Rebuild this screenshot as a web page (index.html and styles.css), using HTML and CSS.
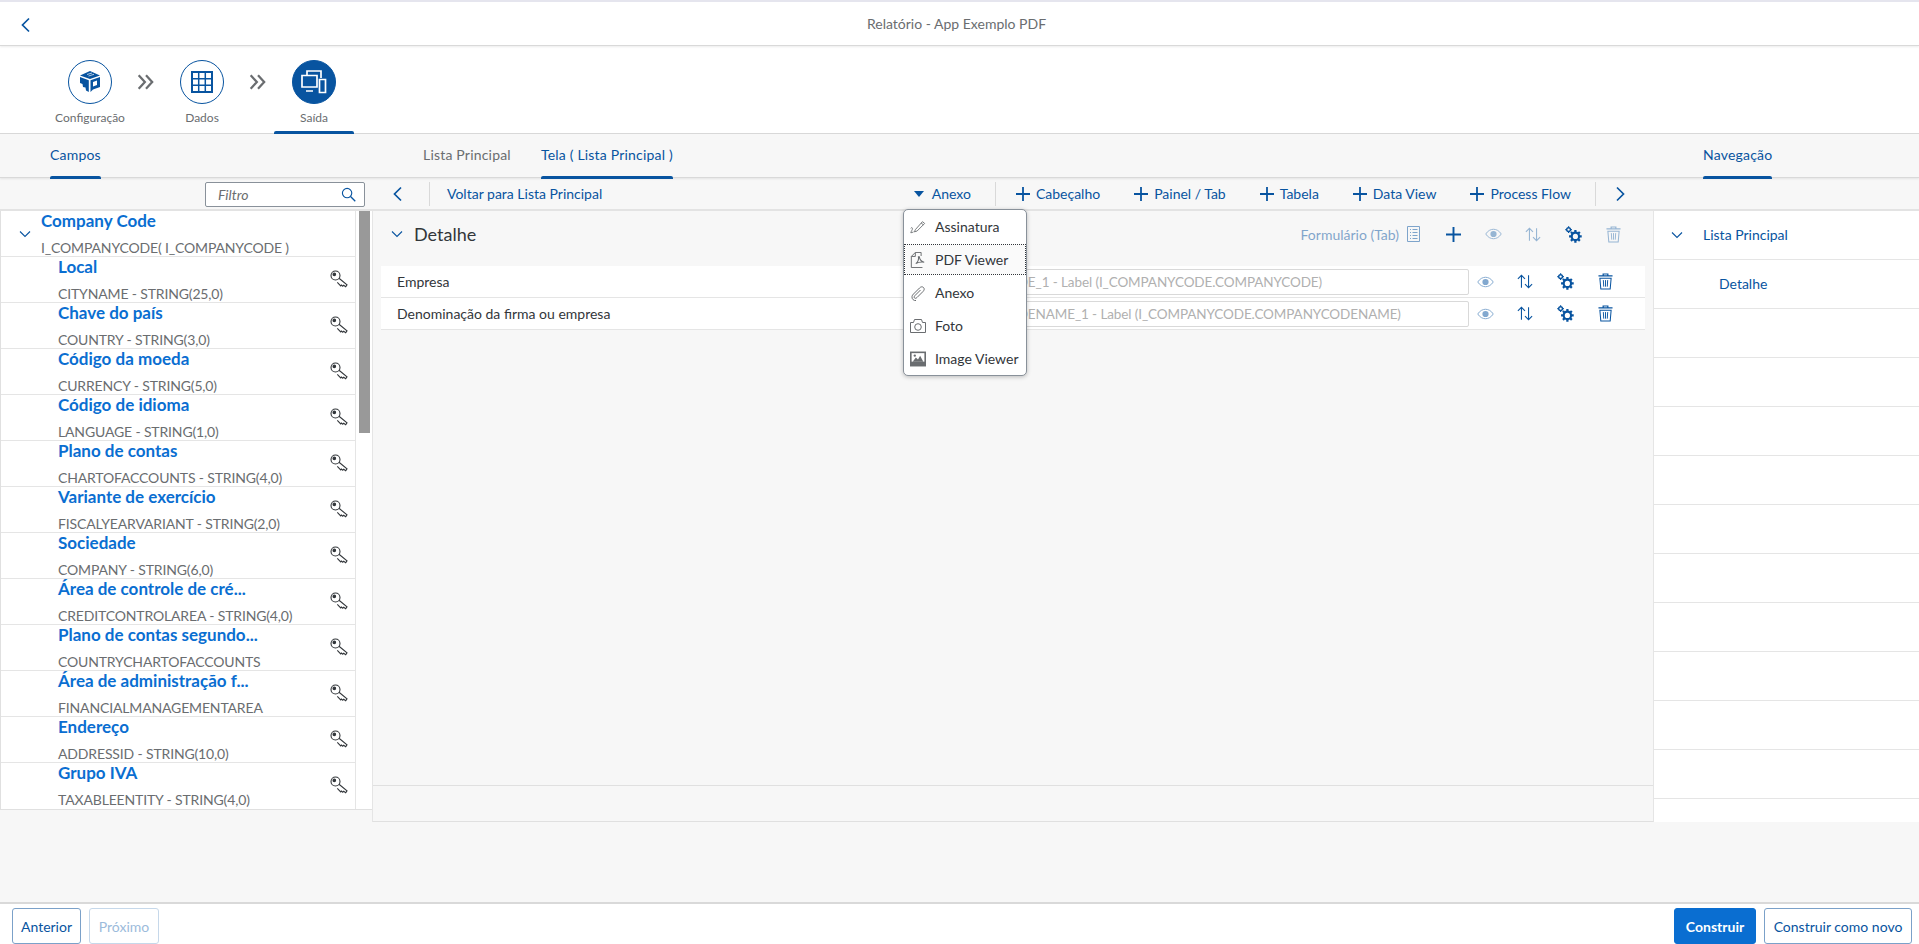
FILE: index.html
```html
<!DOCTYPE html>
<html lang="pt">
  <head>
    <meta charset="UTF-8" />
    <meta name="viewport" content="width=device-width, initial-scale=1.0" />
    <title>Relatório - App Exemplo PDF</title>
    <link rel="stylesheet" href="styles.css">
  </head>
  <body>
    <svg class="sprite" xmlns="http://www.w3.org/2000/svg">
      <symbol id="i-left" viewBox="0 0 16 16"><path d="M11 1.500 4.500 8l6.500 6.500" fill="none" stroke="currentColor" stroke-width="1.700"/></symbol>
      <symbol id="i-right" viewBox="0 0 16 16"><path d="M5 1.500 11.500 8 5 14.500" fill="none" stroke="currentColor" stroke-width="1.700"/></symbol>
      <symbol id="i-down" viewBox="0 0 12 12"><path d="M1 3.500 6 8.500l5-5" fill="none" stroke="currentColor" stroke-width="1.100"/></symbol>
      <symbol id="i-plus" viewBox="0 0 14 14"><path d="M7 0v14M0 7h14" fill="none" stroke="currentColor" stroke-width="1.800"/></symbol>
      <symbol id="i-double" viewBox="0 0 16 14"><path d="M1.500 1 7 7l-5.500 6M8 1l5.500 6L8 13" fill="none" stroke="currentColor" stroke-width="2"/></symbol>
      <symbol id="i-search" viewBox="0 0 16 16"><circle cx="6.500" cy="6.500" r="5" fill="none" stroke="currentColor" stroke-width="1.200"/><path d="m10.200 10.200 5 5" fill="none" stroke="currentColor" stroke-width="1.400"/></symbol>
      <symbol id="i-key" viewBox="0 0 18 18"><g fill="none" stroke="currentColor" stroke-width="1.100"><circle cx="5.500" cy="5.500" r="4.500"/><circle cx="4.300" cy="4.300" r="1.300" fill="currentColor"/><path d="m9 8.300 8 6.500-1.300 1.900-2-1.500-.9 1-1.400-1.100-.7.800-3.400-3.500"/></g></symbol>
      <symbol id="i-box" viewBox="0 0 22 22"><path d="M11 0 21 4.500 11 8 1 4.500zM1 6l8.800 3.200V21L7 19.500l-.5-3-2.500-.5L3.500 13 1 12zM21 6v10l-7 2.500-2.500 2.500V9.200zm-3 3.500-4 1.500v4.500l4-1.500z" fill="currentColor"/><path d="M8 3.500 13 2M9.500 5 15 3.300" stroke="#fff" stroke-width=".7"/></symbol>
      <symbol id="i-table" viewBox="0 0 22 22"><path fill="none" stroke="currentColor" stroke-width="2" d="M1 1h20v20H1z"/><path fill="none" stroke="currentColor" stroke-width="1.500" d="M7.700 1v20M14.300 1v20M1 7.700h20M1 14.300h20"/></symbol>
      <symbol id="i-devices" viewBox="0 0 26 24"><g fill="none" stroke="currentColor" stroke-width="1.700"><path d="M6 5V1h14v7"/><path d="M1 5.500h15V17H1zM5 21h7"/><path d="M18.500 9.500h6v13h-6z"/></g></symbol>
      <symbol id="i-eye" viewBox="0 0 18 12"><path d="M.8 6C3 2.500 6 1 9 1s6 1.500 8.200 5C15 9.500 12 11 9 11S3 9.500.8 6z" fill="none" stroke="currentColor" stroke-width="1"/><circle cx="9" cy="6" r="3.300" fill="currentColor"/></symbol>
      <symbol id="i-sort" viewBox="0 0 18 16"><path d="M5 15V1M1 5l4-4 4 4M13 1v14M9 11l4 4 4-4" fill="none" stroke="currentColor" stroke-width="1.200"/></symbol>
      <symbol id="i-gears" viewBox="0 0 18 18"><g fill="none" stroke="currentColor"><circle cx="3.800" cy="3.800" r="2" stroke-width="1.500"/><path d="M3.800.3v1.200M3.800 6.100v1.200M.3 3.800h1.200M6.100 3.800h1.200" stroke-width="1.300"/><circle cx="11" cy="11" r="3.900" stroke-width="2.300"/><path d="M11 4.300v2.500M11 15.200v2.500M4.300 11h2.500M15.200 11h2.500M6.300 6.300 8 8M14 14l1.700 1.700M6.300 15.700 8 14M14 8l1.700-1.700" stroke-width="2.400"/></g></symbol>
      <symbol id="i-trash" viewBox="0 0 16 18"><g fill="none" stroke="currentColor"><path d="M.5 3h15M5.500 3V1h5v2" stroke-width="1.300"/><path d="M2 5.500 3 17h10l1-11.500z" stroke-width="1.100"/><path d="M5.700 7.500l.4 7M8 7.500v7M10.300 7.500l-.4 7" stroke-width="1"/></g></symbol>
      <symbol id="i-form" viewBox="0 0 13 16"><path d="M.5.500h12v15H.5zM3 3.500h1M5.500 3.500h5M3 6.500h1M5.500 6.500h5M3 9.500h1M5.500 9.500h5M3 12.500h1M5.500 12.500h5" fill="none" stroke="currentColor"/></symbol>
      <symbol id="i-sign" viewBox="0 0 18 16"><g fill="none" stroke="currentColor" stroke-width="1"><path d="m6 11 8-9 2.500 2L8 12.500l-3 1zM12.500 3.500l2.500 2"/><path d="M.8 9.500C2 8 3.500 9 2.500 11S.5 14.500 1 14.500s2-.5 3-1"/></g></symbol>
      <symbol id="i-pdf" viewBox="0 0 16 18"><g fill="none" stroke="currentColor" stroke-width="1.100"><path d="M5 .5h6.500v4M5 .5.500 5v12.500H13"/><path d="M5 .5V5H.5"/><path d="M8.500 5.500c.5 3-1 6-3 7.500 3-1.500 6-2 9.500-1.500-3-.5-5-3-5.500-6z" stroke-width="1.200"/></g></symbol>
      <symbol id="i-clip" viewBox="0 0 16 16"><path d="M6 15.500c-2 .5-4.500-1.500-4-4 .2-1 .6-1.600 1.500-2.500l6-6c1.500-1.500 3-1.500 4-.5s1 2.500-.5 4L7 12.500c-1 1-2 1-2.500.5s-.5-1.500.5-2.500l5.500-5.500" fill="none" stroke="currentColor"/></symbol>
      <symbol id="i-camera" viewBox="0 0 16 14"><path d="M.5 3.500h3l1-3h7l1 3h3v10H.5z" fill="none" stroke="currentColor"/><circle cx="8" cy="8" r="3.300" fill="none" stroke="currentColor"/></symbol>
      <symbol id="i-image" viewBox="0 0 15 14"><path d="M0 0h15v14H0z" fill="currentColor"/><path d="M1.500 1.500h12v8h-12z" fill="#fff"/><path d="m2.500 9.500 3-4 2 2 2-3.500 3 5.500z" fill="currentColor"/><circle cx="4.500" cy="3.800" r="1.100" fill="currentColor"/></symbol>
    </svg>

    <header class="topbar">
      <svg class="icon back"><use href="#i-left"/></svg>
      <span class="topbar-title">Relatório - App Exemplo PDF</span>
    </header>

    <nav class="wizard">
      <div class="step">
        <span class="step-circle"><svg class="step-icon"><use href="#i-box"/></svg></span>
        <span class="step-label">Configuração</span>
      </div>
      <svg class="step-arrow"><use href="#i-double"/></svg>
      <div class="step">
        <span class="step-circle"><svg class="step-icon"><use href="#i-table"/></svg></span>
        <span class="step-label">Dados</span>
      </div>
      <svg class="step-arrow"><use href="#i-double"/></svg>
      <div class="step step-active">
        <span class="step-circle"><svg class="step-icon step-icon-wide"><use href="#i-devices"/></svg></span>
        <span class="step-label">Saída</span>
      </div>
    </nav>

    <div class="tabs">
      <div class="tabs-left"><a class="tab tab-active">Campos</a></div>
      <div class="tabs-mid">
        <a class="tab">Lista Principal</a>
        <a class="tab tab-active">Tela ( Lista Principal )</a>
      </div>
      <div class="tabs-right"><a class="tab tab-active">Navegação</a></div>
    </div>

    <div class="toolbars">
      <div class="filter-bar">
        <div class="filter">
          <span>Filtro</span>
          <svg class="icon-search"><use href="#i-search"/></svg>
        </div>
      </div>
      <div class="toolbar">
        <svg class="icon chevron"><use href="#i-left"/></svg>
        <span class="tool-sep"></span>
        <span class="tool-link">Voltar para Lista Principal</span>
        <div class="tool-group">
          <span class="tool-btn"><span class="caret"></span>Anexo</span>
          <span class="tool-sep"></span>
          <span class="tool-btn"><svg class="plus"><use href="#i-plus"/></svg>Cabeçalho</span>
          <span class="tool-btn"><svg class="plus"><use href="#i-plus"/></svg>Painel / Tab</span>
          <span class="tool-btn"><svg class="plus"><use href="#i-plus"/></svg>Tabela</span>
          <span class="tool-btn"><svg class="plus"><use href="#i-plus"/></svg>Data View</span>
          <span class="tool-btn"><svg class="plus"><use href="#i-plus"/></svg>Process Flow</span>
          <span class="tool-sep"></span>
          <svg class="icon chevron"><use href="#i-right"/></svg>
        </div>
      </div>
      <div class="toolbar-end"></div>
    </div>

    <main class="workspace">
      <aside class="fields">
        <div class="field-list">
          <div class="field-row field-root">
            <svg class="root-chevron"><use href="#i-down"/></svg>
            <div class="field-name">Company Code</div>
            <div class="field-type">I_COMPANYCODE( I_COMPANYCODE )</div>
          </div>
          <div class="field-row">
            <div class="field-name">Local</div>
            <div class="field-type">CITYNAME - STRING(25,0)</div>
            <svg class="key"><use href="#i-key"/></svg>
          </div>
          <div class="field-row">
            <div class="field-name">Chave do país</div>
            <div class="field-type">COUNTRY - STRING(3,0)</div>
            <svg class="key"><use href="#i-key"/></svg>
          </div>
          <div class="field-row">
            <div class="field-name">Código da moeda</div>
            <div class="field-type">CURRENCY - STRING(5,0)</div>
            <svg class="key"><use href="#i-key"/></svg>
          </div>
          <div class="field-row">
            <div class="field-name">Código de idioma</div>
            <div class="field-type">LANGUAGE - STRING(1,0)</div>
            <svg class="key"><use href="#i-key"/></svg>
          </div>
          <div class="field-row">
            <div class="field-name">Plano de contas</div>
            <div class="field-type">CHARTOFACCOUNTS - STRING(4,0)</div>
            <svg class="key"><use href="#i-key"/></svg>
          </div>
          <div class="field-row">
            <div class="field-name">Variante de exercício</div>
            <div class="field-type">FISCALYEARVARIANT - STRING(2,0)</div>
            <svg class="key"><use href="#i-key"/></svg>
          </div>
          <div class="field-row">
            <div class="field-name">Sociedade</div>
            <div class="field-type">COMPANY - STRING(6,0)</div>
            <svg class="key"><use href="#i-key"/></svg>
          </div>
          <div class="field-row">
            <div class="field-name">Área de controle de cré...</div>
            <div class="field-type">CREDITCONTROLAREA - STRING(4,0)</div>
            <svg class="key"><use href="#i-key"/></svg>
          </div>
          <div class="field-row">
            <div class="field-name">Plano de contas segundo...</div>
            <div class="field-type">COUNTRYCHARTOFACCOUNTS</div>
            <svg class="key"><use href="#i-key"/></svg>
          </div>
          <div class="field-row">
            <div class="field-name">Área de administração f...</div>
            <div class="field-type">FINANCIALMANAGEMENTAREA</div>
            <svg class="key"><use href="#i-key"/></svg>
          </div>
          <div class="field-row">
            <div class="field-name">Endereço</div>
            <div class="field-type">ADDRESSID - STRING(10,0)</div>
            <svg class="key"><use href="#i-key"/></svg>
          </div>
          <div class="field-row">
            <div class="field-name">Grupo IVA</div>
            <div class="field-type">TAXABLEENTITY - STRING(4,0)</div>
            <svg class="key"><use href="#i-key"/></svg>
          </div>
        </div>
        <div class="scroll-track"><div class="scroll-thumb"></div></div>
      </aside>

      <section class="canvas">
        <div class="canvas-body">
          <div class="section-head">
            <svg class="section-chevron"><use href="#i-down"/></svg>
            <span class="section-title">Detalhe</span>
            <div class="section-actions">
              <span class="form-tag">Formulário (Tab)<svg class="form-icon"><use href="#i-form"/></svg></span>
              <span class="act"><svg class="plus-big"><use href="#i-plus"/></svg></span>
              <span class="act faded"><svg class="eye"><use href="#i-eye"/></svg></span>
              <span class="act faded"><svg class="sort"><use href="#i-sort"/></svg></span>
              <span class="act"><svg class="gears"><use href="#i-gears"/></svg></span>
              <span class="act faded"><svg class="trash"><use href="#i-trash"/></svg></span>
            </div>
          </div>
          <div class="form-row">
            <span class="form-label">Empresa</span>
            <div class="form-input">COMPANYCODE_1 - Label (I_COMPANYCODE.COMPANYCODE)</div>
            <div class="row-actions">
              <span class="act faded-eye"><svg class="eye"><use href="#i-eye"/></svg></span>
              <span class="act"><svg class="sort"><use href="#i-sort"/></svg></span>
              <span class="act"><svg class="gears"><use href="#i-gears"/></svg></span>
              <span class="act"><svg class="trash"><use href="#i-trash"/></svg></span>
            </div>
          </div>
          <div class="form-row">
            <span class="form-label">Denominação da firma ou empresa</span>
            <div class="form-input">COMPANYCODENAME_1 - Label (I_COMPANYCODE.COMPANYCODENAME)</div>
            <div class="row-actions">
              <span class="act faded-eye"><svg class="eye"><use href="#i-eye"/></svg></span>
              <span class="act"><svg class="sort"><use href="#i-sort"/></svg></span>
              <span class="act"><svg class="gears"><use href="#i-gears"/></svg></span>
              <span class="act"><svg class="trash"><use href="#i-trash"/></svg></span>
            </div>
          </div>
        </div>
        <div class="canvas-foot"></div>

        <ul class="menu">
          <li><svg class="menu-icon"><use href="#i-sign"/></svg>Assinatura</li>
          <li class="menu-focus"><svg class="menu-icon"><use href="#i-pdf"/></svg>PDF Viewer</li>
          <li><svg class="menu-icon"><use href="#i-clip"/></svg>Anexo</li>
          <li><svg class="menu-icon"><use href="#i-camera"/></svg>Foto</li>
          <li><svg class="menu-icon"><use href="#i-image"/></svg>Image Viewer</li>
        </ul>
      </section>

      <aside class="tree">
        <div class="tree-row"><svg class="tree-chevron"><use href="#i-down"/></svg>Lista Principal</div>
        <div class="tree-row tree-child">Detalhe</div>
        <div class="tree-row"></div>
        <div class="tree-row"></div>
        <div class="tree-row"></div>
        <div class="tree-row"></div>
        <div class="tree-row"></div>
        <div class="tree-row"></div>
        <div class="tree-row"></div>
        <div class="tree-row"></div>
        <div class="tree-row"></div>
        <div class="tree-row"></div>
      </aside>
    </main>

    <div class="spacer"></div>

    <footer class="footer">
      <button class="btn btn-prev">Anterior</button>
      <button class="btn btn-next">Próximo</button>
      <button class="btn btn-primary">Construir</button>
      <button class="btn btn-copy">Construir como novo</button>
    </footer>
  </body>
</html>
```

FILE: styles.css
```css
* {
  margin: 0;
  padding: 0;
  box-sizing: border-box;
}

body {
  font-family: Lato, "Liberation Sans", sans-serif;
  font-size: 14px;
  color: #32363a;
  background: #f7f7f7;
  height: 100vh;
  overflow: hidden;
  display: flex;
  flex-direction: column;
}

.sprite {
  display: none;
}

/* top bar */
.topbar {
  height: 46px;
  flex: none;
  background: white;
  border-top: 2px solid #e5e5ee;
  border-bottom: 1px solid #d9d9d9;
  box-shadow: 0 1px 2px rgba(0, 0, 0, 0.08);
  padding-right: 6px;
  display: flex;
  align-items: center;
  justify-content: center;
  position: relative;
}

.topbar-title {
  color: #6a6d70;
}

.back {
  position: absolute;
  left: 18px;
  top: 15px;
  width: 16px;
  height: 16px;
  color: #0854a0;
}

/* wizard */
.wizard {
  height: 88px;
  flex: none;
  background: white;
  padding-left: 50px;
  display: flex;
  border-bottom: 1px solid #d9d9d9;
}

.step {
  width: 80px;
  display: flex;
  flex-direction: column;
  align-items: center;
  padding-top: 14px;
  position: relative;
}

.step-circle {
  width: 44px;
  height: 44px;
  border-radius: 50%;
  border: 1px solid #0854a0;
  color: #0854a0;
  display: flex;
  align-items: center;
  justify-content: center;
}

.step-icon {
  width: 22px;
  height: 22px;
}

.step-icon-wide {
  width: 26px;
  height: 24px;
}

.step-label {
  font-size: 12px;
  color: #6a6d70;
  margin-top: 6px;
  white-space: nowrap;
}

.step-active .step-circle {
  background: #0854a0;
  color: white;
}

.step-active::after {
  content: "";
  position: absolute;
  left: 0;
  right: 0;
  bottom: -1px;
  height: 3px;
  background: #0854a0;
  border-radius: 2px 2px 0 0;
}

.step-arrow {
  width: 18px;
  height: 16px;
  margin: 28px 7px 0;
  color: #6a6d70;
}

/* tabs */
.tabs {
  height: 44px;
  flex: none;
  display: grid;
  grid-template-columns: 372px 1282px 265px;
  border-bottom: 1px solid #d9d9d9;
  box-shadow: 0 1px 2px rgba(0, 0, 0, 0.08);
  position: relative;
  letter-spacing: 0.2px;
}

.tabs-left {
  padding-left: 50px;
  display: flex;
}

.tabs-mid {
  padding-left: 51px;
  display: flex;
  gap: 30px;
}

.tabs-right {
  padding-left: 49px;
  display: flex;
}

.tab {
  color: #6a6d70;
  height: 44px;
  line-height: 42px;
  position: relative;
}

.tab-active {
  color: #0854a0;
}

.tab-active::after {
  content: "";
  position: absolute;
  left: 0;
  right: 0;
  bottom: -1px;
  height: 3px;
  background: #0854a0;
  border-radius: 2px 2px 0 0;
}

/* toolbars */
.toolbars {
  height: 33px;
  flex: none;
  display: grid;
  grid-template-columns: 372px 1282px 265px;
  border-bottom: 2px solid #e3e3e3;
}

.filter-bar {
  padding: 4px 0 0 205px;
}

.filter {
  width: 160px;
  height: 25px;
  border: 1px solid #89919a;
  border-radius: 2px;
  background: white;
  padding: 0 8px 0 12px;
  display: flex;
  align-items: center;
  justify-content: space-between;
  font-style: italic;
  color: #6a6d70;
}

.icon-search {
  width: 15px;
  height: 15px;
  color: #0854a0;
}

.toolbar {
  display: flex;
  align-items: center;
  padding-left: 18px;
  color: #0854a0;
}

.toolbar .chevron {
  width: 16px;
  height: 16px;
}

.tool-sep {
  width: 1px;
  height: 24px;
  background: #d9d9d9;
}

.toolbar > .tool-sep {
  margin-left: 23px;
}

.tool-link {
  margin-left: 17px;
}

.tool-group {
  margin-left: auto;
  padding-right: 26px;
  display: flex;
  align-items: center;
}

.tool-btn {
  display: flex;
  align-items: center;
  gap: 6px;
  margin-left: 34px;
  white-space: nowrap;
}

.tool-btn:first-child {
  margin-left: 0;
}

.tool-sep + .tool-btn {
  margin-left: 20px;
}

.tool-group > .tool-sep {
  margin-left: 24px;
}

.tool-group > .chevron {
  margin-left: 16px;
}

.caret {
  width: 0;
  height: 0;
  margin-right: 2px;
  border-left: 5px solid transparent;
  border-right: 5px solid transparent;
  border-top: 6px solid #0854a0;
}

.plus {
  width: 14px;
  height: 14px;
}

/* main area */
.workspace {
  height: 611px;
  flex: none;
  display: grid;
  grid-template-columns: 372px 1282px 265px;
}

.fields {
  height: 599px;
  background: white;
  border-left: 1px solid #e0e0e0;
  border-bottom: 1px solid #e0e0e0;
  display: flex;
  overflow: hidden;
}

.field-list {
  width: 355px;
  flex: none;
  border-right: 1px solid #e5e5e5;
}

.field-row {
  height: 46px;
  padding-left: 57px;
  border-bottom: 1px solid #e5e5e5;
  position: relative;
  overflow: hidden;
}

.field-row:last-child {
  border-bottom: none;
}

.field-root {
  padding-left: 40px;
}

.field-name {
  font-size: 17px;
  font-weight: 700;
  color: #0a6ed1;
  line-height: 19px;
  height: 19px;
}

.field-type {
  color: #6a6d70;
  line-height: 18px;
  margin-top: 9px;
  letter-spacing: -0.15px;
  white-space: nowrap;
}

.root-chevron {
  position: absolute;
  left: 18px;
  top: 17px;
  width: 12px;
  height: 12px;
  color: #0854a0;
}

.key {
  position: absolute;
  left: 329px;
  top: 13px;
  width: 18px;
  height: 18px;
  color: #32363a;
}

.scroll-track {
  flex: 1;
  padding: 0 2px 0 3px;
}

.scroll-thumb {
  height: 222px;
  background: #999;
}

.canvas {
  position: relative;
  display: flex;
  flex-direction: column;
  border-left: 1px solid #e5e5e5;
  border-right: 1px solid #e5e5e5;
  border-bottom: 1px solid #e0e0e0;
}

.canvas-body {
  flex: 1;
  padding: 0 8px;
  border-bottom: 1px solid #e0e0e0;
}

.canvas-foot {
  height: 35px;
  flex: none;
}

.section-head {
  height: 55px;
  padding: 0 0 9px 10px;
  display: flex;
  align-items: center;
  position: relative;
}

.section-chevron {
  width: 12px;
  height: 12px;
  color: #0854a0;
}

.section-title {
  font-size: 18px;
  margin-left: 11px;
}

.section-actions {
  margin-left: auto;
  display: flex;
  align-items: center;
  padding-right: 12px;
}

.form-tag {
  display: flex;
  align-items: center;
  gap: 8px;
  color: #0854a0;
  opacity: 0.5;
  margin-right: 13px;
}

.form-icon {
  width: 13px;
  height: 16px;
}

.act {
  width: 40px;
  display: flex;
  align-items: center;
  justify-content: center;
  color: #0854a0;
}

.faded {
  opacity: 0.4;
}

.faded-eye {
  opacity: 0.5;
}

.plus-big {
  width: 15px;
  height: 15px;
}

.eye {
  width: 17px;
  height: 12px;
}

.sort {
  width: 16px;
  height: 15px;
}

.gears {
  width: 17px;
  height: 17px;
}

.trash {
  width: 15px;
  height: 17px;
}

.form-row {
  height: 32px;
  background: white;
  border-bottom: 1px solid #e5e5e5;
  display: flex;
  align-items: center;
  padding-left: 16px;
  position: relative;
}

.form-label {
  width: 524px;
}

.form-input {
  width: 548px;
  height: 26px;
  border: 1px solid #d9d9d9;
  border-radius: 2px;
  font-size: 13.5px;
  letter-spacing: -0.1px;
  line-height: 24px;
  padding-left: 10px;
  color: #b0b0b0;
  white-space: nowrap;
  overflow: hidden;
  background: white;
}

.row-actions {
  display: flex;
  margin-left: -4px;
}

/* dropdown over the form */
.menu {
  position: absolute;
  left: 530px;
  top: -2px;
  width: 124px;
  height: 167px;
  list-style: none;
  background: white;
  border: 1px solid #89919a;
  border-radius: 5px;
  box-shadow: 0 1px 4px rgba(0, 0, 0, 0.25);
  z-index: 5;
}

.menu li {
  height: 33px;
  display: flex;
  align-items: center;
  gap: 9px;
  padding-left: 6px;
  white-space: nowrap;
}

.menu .menu-focus {
  height: 29px;
  margin: 2px 1px;
  padding-left: 5px;
  background: #fafafa;
  outline: 1px dotted #32363a;
}

.menu-icon {
  width: 16px;
  height: 16px;
  color: #6a6d70;
}

/* right tree */
.tree {
  background: white;
  overflow: hidden;
}

.tree-row {
  height: 49px;
  border-bottom: 1px solid #e5e5e5;
  display: flex;
  align-items: center;
  padding: 0 0 2px 49px;
  color: #0854a0;
  position: relative;
}

.tree-child {
  padding-left: 65px;
}

.tree-chevron {
  position: absolute;
  left: 17px;
  top: 18px;
  width: 12px;
  height: 12px;
}

.spacer {
  flex: 1;
}

/* footer */
.footer {
  height: 42px;
  flex: none;
  background: white;
  border-top: 2px solid #d9d9d9;
  padding: 4px 7px 0 12px;
  display: flex;
  gap: 8px;
  align-items: flex-start;
}

.btn {
  height: 36px;
  font-family: inherit;
  font-size: 14px;
  color: #0854a0;
  background: white;
  border: 1px solid #7ba1c9;
  border-radius: 3px;
}

.btn-prev {
  width: 69px;
}

.btn-next {
  width: 70px;
  color: #9cbbdb;
  border-color: #c6d8ea;
}

.btn-primary {
  width: 82px;
  margin-left: auto;
  background: #0a6ed1;
  border-color: #0a6ed1;
  color: white;
  font-weight: 700;
}

.btn-copy {
  width: 148px;
}
```
